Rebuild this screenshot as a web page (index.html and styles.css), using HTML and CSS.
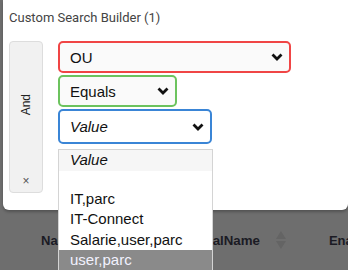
FILE: index.html
```html
<!DOCTYPE html>
<html lang="en">
<head>
    <meta charset="UTF-8" />
    <title>Custom Search Builder</title>
    <link rel="stylesheet" href="styles.css">
</head>
<body>

<div class="page">
    <!-- Search builder popup -->
    <div class="builder">
        <div class="title">Custom Search Builder (1)</div>
        <div class="group">
            <div class="logic">
                <span class="logic-text">And</span>
                <span class="delete">&times;</span>
            </div>
            <div class="criteria">
                <div class="field field-data">
                    <span>OU</span>
                    <svg class="chevron" width="12" height="8" viewBox="0 0 12 8"><polyline points="1.5,1.5 6,6 10.5,1.5" /></svg>
                </div>
                <div class="field field-cond">
                    <span>Equals</span>
                    <svg class="chevron" width="12" height="8" viewBox="0 0 12 8"><polyline points="1.5,1.5 6,6 10.5,1.5" /></svg>
                </div>
                <div class="field field-value">
                    <span class="placeholder">Value</span>
                    <svg class="chevron" width="12" height="8" viewBox="0 0 12 8"><polyline points="1.5,1.5 6,6 10.5,1.5" /></svg>
                </div>
            </div>
        </div>
    </div>

    <!-- Table header behind the popup -->
    <div class="table-head">
        <div class="col col-name">Name</div>
        <div class="col col-upn">UserPrincipalName</div>
        <span class="col sort"></span>
        <div class="col col-enabled">Enabled</div>
    </div>

    <!-- Open dropdown of the value select -->
    <ul class="options">
        <li class="option placeholder">Value</li>
        <li class="option blank"></li>
        <li class="option">IT,parc</li>
        <li class="option">IT-Connect</li>
        <li class="option">Salarie,user,parc</li>
        <li class="option selected">user,parc</li>
    </ul>
</div>

</body>
</html>
```

FILE: styles.css
```css
body {
    margin: 0;
    background-color: #6e6e6e;
    font-family: "Liberation Sans", Arial, sans-serif;
    overflow: hidden;
}
.page {
    position: relative;
    width: 348px;
    height: 270px;
    overflow: hidden;
}
.builder {
    margin-left: 3px;
    width: 345px;
    height: 210px;
    box-sizing: border-box;
    background-color: #fff;
    border-radius: 0 0 6px 6px;
    box-shadow: 0 2px 3px rgba(0, 0, 0, 0.25);
    padding: 9px 0 0 6px;
}
.title {
    font-family: Roboto, sans-serif;
    font-size: 13px;
    color: #444;
    height: 18px;
    line-height: 18px;
}
.group {
    display: flex;
    gap: 15px;
    margin-top: 14px;
}
.logic {
    width: 34px;
    height: 152px;
    box-sizing: border-box;
    background-color: #f1f1f1;
    border: 1px solid #ddd;
    border-radius: 4px;
    display: flex;
    flex-direction: column;
    align-items: center;
}
.logic-text {
    margin-top: 52px;
    font-size: 12px;
    color: #222;
    writing-mode: vertical-rl;
    transform: rotate(180deg);
}
.delete {
    margin-top: auto;
    margin-bottom: 4px;
    font-size: 12px;
    color: #555;
}
.criteria {
    display: flex;
    flex-direction: column;
    gap: 2px;
}
.field {
    height: 32px;
    box-sizing: border-box;
    border: 2px solid #ccc;
    border-radius: 5px;
    background-color: #fafafa;
    display: flex;
    align-items: center;
    justify-content: space-between;
    padding: 0 6px 0 10px;
    font-size: 15px;
    color: #111;
}
.field-data {
    width: 233px;
    border-color: #f04545;
}
.field-cond {
    width: 119px;
    border-color: #6cc35e;
}
.field-value {
    width: 154px;
    height: 35px;
    border-color: #3a85d6;
    background-color: #fff;
}
.placeholder {
    font-style: italic;
}
.chevron polyline {
    fill: none;
    stroke: #111;
    stroke-width: 2.8;
}
.table-head {
    display: flex;
    align-items: center;
    height: 60px;
    padding-left: 41px;
    font-size: 13px;
    font-weight: bold;
    color: #1b1b24;
    white-space: nowrap;
}
.col {
    flex-shrink: 0;
}
.col-name {
    width: 97px;
}
.col-upn {
    font-size: 13.3px;
}
.sort {
    margin-left: 16px;
    width: 10px;
    height: 18px;
    background-color: #646464;
    clip-path: polygon(50% 0, 100% 45%, 0 45%, 0 55%, 100% 55%, 50% 100%, 0 55%, 0 45%);
}
.col-enabled {
    margin-left: 43px;
}
.options {
    position: absolute;
    left: 58px;
    top: 149px;
    width: 155px;
    height: 130px;
    box-sizing: border-box;
    margin: 0;
    padding: 0;
    list-style: none;
    background-color: #fff;
    border: 1px solid #d4d4d4;
    font-size: 15px;
    color: #111;
}
.option {
    height: 20.5px;
    line-height: 20.5px;
    padding-left: 11px;
}
.option.blank {
    height: 18px;
}
.option.placeholder {
    background-color: #f6f6f6;
}
.option.selected {
    background-color: #8a8a8a;
    color: #f2f2ff;
}
```
